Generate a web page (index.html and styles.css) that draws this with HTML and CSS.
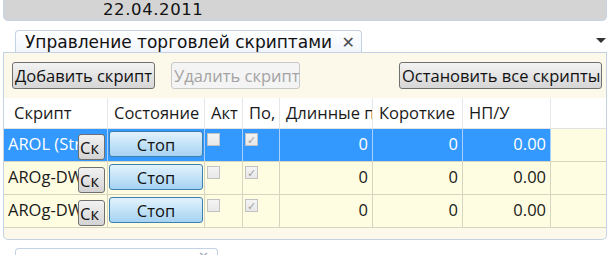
FILE: index.html
```html
<!DOCTYPE html>
<html lang="ru">

<head>
    <meta charset="UTF-8">
    <title>Скрипты</title>
    <link rel="stylesheet" href="styles.css">
</head>

<body>
    <div class="datebar">22.04.2011</div>

    <div class="tabstrip">
        <div class="tab">Управление торговлей скриптами <span class="tab-close">&#x2715;</span></div>
        <div class="tab-menu"></div>
    </div>

    <div class="panel">
        <div class="toolbar">
            <button class="btn btn-add">Добавить скрипт</button>
            <button class="btn btn-del" disabled>Удалить скрипт</button>
            <button class="btn btn-stopall">Остановить все скрипты</button>
        </div>

        <div class="grid">
            <div class="row head">
                <div class="cell">Скрипт</div>
                <div class="cell">Состояние</div>
                <div class="cell">Акт</div>
                <div class="cell">По, %</div>
                <div class="cell">Длинные позиции</div>
                <div class="cell">Короткие</div>
                <div class="cell">НП/У</div>
                <div class="cell fill"></div>
            </div>

            <div class="row selected">
                <div class="cell name"><span class="name-text">AROL (Strategy)</span><button class="mini">Ск</button></div>
                <div class="cell state"><button class="stop">Стоп</button></div>
                <div class="cell chk"><span class="box"></span></div>
                <div class="cell chk"><span class="box checked">&#x2713;</span></div>
                <div class="cell num">0</div>
                <div class="cell num">0</div>
                <div class="cell num">0.00</div>
                <div class="cell fill"></div>
            </div>

            <div class="row">
                <div class="cell name"><span class="name-text">AROg-DWL</span><button class="mini">Ск</button></div>
                <div class="cell state"><button class="stop">Стоп</button></div>
                <div class="cell chk"><span class="box"></span></div>
                <div class="cell chk"><span class="box checked">&#x2713;</span></div>
                <div class="cell num">0</div>
                <div class="cell num">0</div>
                <div class="cell num">0.00</div>
                <div class="cell fill"></div>
            </div>

            <div class="row">
                <div class="cell name"><span class="name-text">AROg-DWS</span><button class="mini">Ск</button></div>
                <div class="cell state"><button class="stop">Стоп</button></div>
                <div class="cell chk"><span class="box"></span></div>
                <div class="cell chk"><span class="box checked">&#x2713;</span></div>
                <div class="cell num">0</div>
                <div class="cell num">0</div>
                <div class="cell num">0.00</div>
                <div class="cell fill"></div>
            </div>
        </div>
    </div>

    <div class="bottom-tab"><span class="tab-close">&#x2715;</span></div>
</body>

</html>
```

FILE: styles.css
```css
body {
    margin: 0;
    padding: 0;
    background-color: #ffffff;
    font-family: 'Open Sans', sans-serif;
    color: #1a1a1a;
    overflow: hidden;
}

.datebar {
    margin: -4px 3px 0 3px;
    height: 24px;
    padding-left: 99px;
    background-color: #d4d4d4;
    border: 1px solid #c3d2e4;
    border-top: none;
    border-radius: 0 0 5px 5px;
    font-family: 'DejaVu Sans', sans-serif;
    font-size: 16.5px;
    letter-spacing: 0.6px;
    line-height: 28px;
    color: #111111;
}

.tabstrip {
    display: flex;
    align-items: flex-end;
    margin: 8px 3px 0 3px;
    height: 23px;
    padding-left: 12px;
    border-bottom: 1px solid #c3d2e4;
}

.tab {
    width: 336px;
    height: 21px;
    padding-left: 9px;
    background: linear-gradient(#ffffff, #f1f5fb);
    border: 1px solid #c3d2e4;
    border-bottom: none;
    border-radius: 4px 4px 0 0;
    font-family: 'DejaVu Sans', sans-serif;
    font-size: 17px;
    line-height: 22px;
    white-space: nowrap;
    color: #111111;
}

.tab .tab-close {
    margin-left: 4px;
    font-size: 16px;
    color: #4a4a4a;
}

.tab-menu {
    margin-left: auto;
    margin-right: 1px;
    margin-bottom: 9px;
    width: 0;
    height: 0;
    border-left: 5px solid transparent;
    border-right: 5px solid transparent;
    border-top: 5px solid #333333;
}

.panel {
    margin: 0 3px;
    height: 186px;
    background-color: #fcf9ea;
    border: 1px solid #c3d2e4;
    border-top: none;
    border-radius: 0 0 5px 5px;
}

.toolbar {
    display: flex;
    gap: 16px;
    padding: 9px 4px 0 8px;
}

.btn {
    height: 27px;
    padding: 0 2px;
    font-family: 'Open Sans', sans-serif;
    font-size: 16.5px;
    white-space: nowrap;
    color: #111111;
    background: linear-gradient(#f3f3f3, #e4e4e4 50%, #d6d6d6);
    border: 1px solid #707070;
    border-radius: 3px;
}

.btn-add {
    width: 143px;
}

.btn-del {
    width: 129px;
    color: #a3a3a3;
    background: #f4f4f4;
    border-color: #c9c9c9;
}

.btn-stopall {
    width: 203px;
    margin-left: auto;
}

.grid {
    margin-top: 9px;
    margin-left: 0;
}

.row {
    display: grid;
    grid-template-columns: 104px 97px 38px 37px 93px 90px 88px 1fr;
    height: 32px;
    background-color: #fffde1;
    border-bottom: 1px solid #d7d4c0;
}

.row.head {
    height: 30px;
    background-color: #ffffff;
    border-bottom: 1px solid #e2e2e2;
}

.cell {
    overflow: hidden;
    white-space: nowrap;
    padding: 0 4px;
    font-size: 16.5px;
    line-height: 30px;
    border-right: 1px solid #d7d4c0;
}

.head .cell {
    padding-left: 6px;
    border-right-color: #e6e6e6;
}

.head .cell:first-child {
    padding-left: 10px;
}

.cell.fill {
    border-right: none;
    background-color: #fffde1;
}

.head .cell.fill {
    background-color: #ffffff;
}

.cell.num {
    text-align: right;
}

.selected .cell {
    background-color: #3399ff;
    color: #ffffff;
    border-right-color: #a9cffa;
}

.selected .cell.fill {
    background-color: #fffde1;
}

.cell.name {
    display: flex;
    padding-right: 2px;
}

.name-text {
    flex: 1;
    overflow: hidden;
}

.mini {
    width: 27px;
    height: 26px;
    margin-top: 5px;
    padding: 0 0 0 1px;
    overflow: hidden;
    text-align: left;
    font-family: 'Open Sans', sans-serif;
    font-size: 16.5px;
    color: #111111;
    background: linear-gradient(#f2f2f2, #e3e3e3 50%, #d3d3d3);
    border: 1px solid #707070;
    border-radius: 3px;
}

.cell.state {
    padding: 0 2px 0 1px;
}

.stop {
    width: 94px;
    height: 26px;
    margin-top: 2px;
    vertical-align: top;
    font-family: 'Open Sans', sans-serif;
    font-size: 16.5px;
    color: #111111;
    background: linear-gradient(#e3f2fc, #c4e3f8 50%, #a6d2f2);
    border: 1px solid #3c7fb1;
    border-radius: 3px;
}

.cell.chk {
    padding: 4px 0 0 2px;
    line-height: 0;
}

.box {
    display: inline-block;
    width: 13px;
    height: 13px;
    box-sizing: border-box;
    background: linear-gradient(#f4f4f4, #e8e8e8);
    border: 1px solid #c2c2c2;
    font-size: 11px;
    line-height: 11px;
    text-align: center;
    color: #a0a0a0;
}

.bottom-tab {
    margin: 8px 0 0 15px;
    width: 201px;
    height: 12px;
    border: 1px solid #c3d2e4;
    border-bottom: none;
    border-radius: 4px 4px 0 0;
    text-align: right;
    line-height: 12px;
}

.bottom-tab .tab-close {
    margin-right: 8px;
    font-size: 13px;
    color: #9aa4b0;
}
```
